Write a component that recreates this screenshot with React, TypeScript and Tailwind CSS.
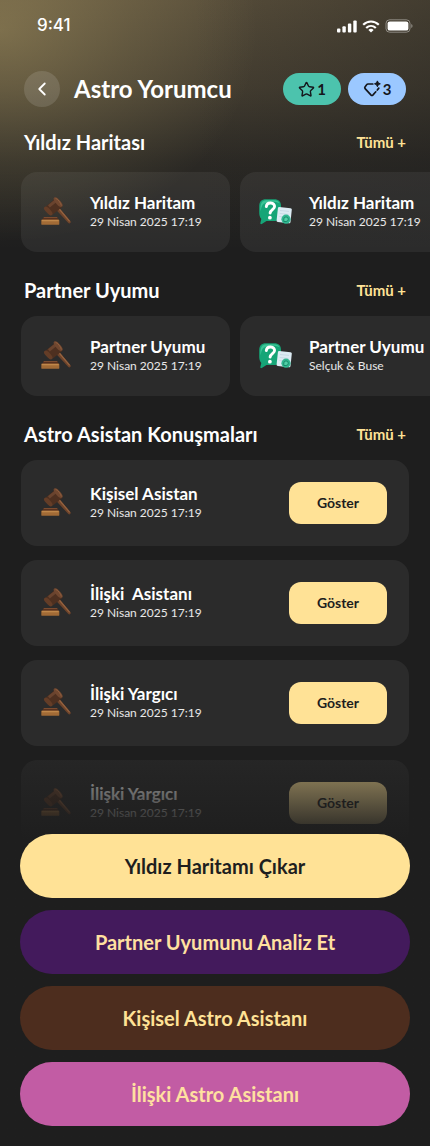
import { ChevronLeft, Star } from "lucide-react";

const chartCards = [
  { icon: "gavel", title: "Yıldız Haritam", sub: "29 Nisan 2025 17:19" },
  { icon: "question", title: "Yıldız Haritam", sub: "29 Nisan 2025 17:19" },
];

const partnerCards = [
  { icon: "gavel", title: "Partner Uyumu", sub: "29 Nisan 2025 17:19" },
  { icon: "question", title: "Partner Uyumu", sub: "Selçuk & Buse" },
];

const chats = ["Kişisel Asistan", "İlişki  Asistanı", "İlişki Yargıcı", "İlişki Yargıcı"];

const actions = [
  { label: "Yıldız Haritamı Çıkar", className: "bg-[#ffe296] text-[#1e1e1e]" },
  { label: "Partner Uyumunu Analiz Et", className: "bg-[#431a5c] text-[#ffe0a0]" },
  { label: "Kişisel Astro Asistanı", className: "bg-[#4d2d1e] text-[#ffe296]" },
  { label: "İlişki Astro Asistanı", className: "bg-[#c25ca4] text-[#ffe0a0]" },
];

function GavelIcon() {
  return (
    <svg viewBox="0 1 32 32" className="size-8 shrink-0" aria-hidden="true">
      <path d="M15.800 14.600l2.800-2.300 12 13.900c.8 1.200-1 2.900-2.200 1.900z" fill="#6e442b" />
      <path d="M17.900 13.400l1-.8 11.200 13.300-.9.8z" fill="#96633f" />
      <path d="M5.800 11.500l9.500-7.800 7 8.200-9.500 7.700z" fill="#4e3020" />
      <path d="M8 10.200l7.200-6 2 2.300-7.400 6.100z" fill="#69432e" />
      <path d="M4.300 12.200c1.400-1.500 3.300-.4 5.500 2.100 2.300 2.600 3.700 4.600 2.300 5.800-1.500 1.100-3.500-.3-5.600-2.800-2.100-2.400-3.300-3.800-2.200-5.100z" fill="#643d27" />
      <path d="M14.200 2.600c1.500-1.100 3.500.3 5.700 2.800 2.300 2.700 3.700 5.100 2.300 6.200-1.500 1.200-3.500-.2-5.800-2.900-2.200-2.600-3.600-5-2.200-6.100z" fill="#70472f" />
      <path d="M15.500 3.300c2.200.5 5.400 4.600 5.900 7.200" fill="none" stroke="#976343" strokeWidth=".8" />
      <path d="M3.600 22.300h13.800l1.100 2.700H2.400z" fill="#57301e" />
      <path d="M4 22h13l.5 1H3.500z" fill="#7b4c30" />
      <rect x="1.300" y="24.600" width="18" height="5.200" rx=".9" fill="#a26b36" />
      <path d="M1.900 25h16.800v1.300H1.900z" fill="#bf874a" />
    </svg>
  );
}

function QuestionIcon() {
  return (
    <svg viewBox="2 0 36 32" className="h-8 w-9 shrink-0" aria-hidden="true">
      <path d="M9 3.300h8c4.800 0 7 2.300 7 6.800v8c0 5-2.300 7-7 7H9.500L4.800 28c-1 .5-1.700-.2-1.400-1.200L4.300 23C2.600 21 2.200 18.600 2.200 16v-5.500c0-5 2.200-7.200 6.800-7.200z" fill="#16a577" />
      <path d="M9.300 4.300h7.500c3 0 5 .9 5.800 3C20 5.500 11 4.800 6.500 8 4.800 9.300 4 13 3.500 15.500 3 8 4.500 4.300 9.300 4.300z" fill="#3cc496" />
      <path d="M9.300 10.600c.3-2.600 2.100-3.800 4.500-3.600 2.500.2 4 1.900 3.700 3.900-.4 2.700-4.200 2.900-4.400 6.200" fill="none" stroke="#fff" strokeWidth="2.900" strokeLinecap="round" />
      <circle cx="12.900" cy="21.700" r="1.900" fill="#fff" />
      <path d="M22.300 11.100l11.200 1.200c.9.1 1.400.7 1.300 1.500l-1.300 12.300c-.1.900-.7 1.300-1.500 1.200l-11.200-1.200c-.8-.1-1.300-.7-1.200-1.500l1.300-12.400c.1-.8.6-1.200 1.400-1.100z" fill="#dcebf3" />
      <path d="M23 14.500l9 .9M22.700 17.500l9 .9M22.400 20.500l4.500.4" stroke="#c3d6e2" strokeWidth=".8" />
      <circle cx="29" cy="23.200" r="4.600" fill="#31b891" />
      <path d="M29 20.900a2.300 2.300 0 0 1 0 4.600h-2.200v-2.300a2.200 2.200 0 0 1 2.200-2.300z" fill="#50d0a7" stroke="#107c60" strokeWidth=".8" />
    </svg>
  );
}

function DiamondIcon() {
  return (
    <svg viewBox="0 0 18 18" className="size-[18px]" fill="none" aria-hidden="true">
      <path
        d="M9.800 4H5.100c-.7 0-1.200.3-1.600.9L2 7.100c-.4.600-.3 1.100.1 1.600l6 6.400c.5.500 1.200.5 1.700 0l3-3.300M14.300 10l1.500-1.900"
        stroke="#15171c"
        strokeWidth="1.700"
        strokeLinecap="round"
      />
      <path d="M14.400.9l.9 2 2 .9-2 .9-.9 2-.9-2-2-.9 2-.9z" fill="#15171c" stroke="#15171c" strokeLinejoin="round" />
    </svg>
  );
}

function StatusBar() {
  return (
    <div className="flex h-[52px] items-center justify-between pr-[17px] pl-[37px]">
      <span className="font-['Inter'] text-[17px] font-medium">9:41</span>
      <div className="flex items-center gap-[5px]">
        <svg viewBox="0 0 20 13" className="h-[13px] w-5" fill="#fff" aria-hidden="true">
          <rect x="0" y="8.500" width="3.400" height="4" rx="1" />
          <rect x="5.400" y="6.300" width="3.400" height="6.200" rx="1" />
          <rect x="10.900" y="3.500" width="3.400" height="9" rx="1" />
          <rect x="16.300" y="0.500" width="3.400" height="12" rx="1" />
        </svg>
        <svg viewBox="0 0 18 13" className="h-[13px] w-[18px]" fill="none" stroke="#fff" strokeWidth="2.200" aria-hidden="true">
          <path d="M1.200 4.800c4.500-4.400 11.100-4.400 15.600 0" />
          <path d="M4.200 8c2.800-2.700 6.800-2.700 9.600 0" />
          <path d="M9 12.500L6.400 9.900c1.500-1.400 3.700-1.400 5.200 0z" fill="#fff" stroke="none" />
        </svg>
        <svg viewBox="0 0 28 14" className="h-[14px] w-7" aria-hidden="true">
          <rect x="1" y=".8" width="24" height="12.400" rx="3.600" fill="none" stroke="#fff" strokeOpacity=".4" />
          <rect x="2.600" y="2.400" width="20.800" height="9.200" rx="2.200" fill="#fff" />
          <path d="M26.300 5v4c1.600-.7 1.600-3.300 0-4z" fill="#fff" fillOpacity=".45" />
        </svg>
      </div>
    </div>
  );
}

function SectionHeader({ title }: { title: string }) {
  return (
    <div className="flex h-7 items-center justify-between px-6">
      <h2 className="text-xl font-bold">{title}</h2>
      <a href="#" className="text-[15px] font-bold text-[#ffe296]">
        Tümü +
      </a>
    </div>
  );
}

function CardText({ title, sub }: { title: string; sub: string }) {
  return (
    <div className="whitespace-pre">
      <h3 className="text-[17px] leading-5 font-bold">{title}</h3>
      <p className="text-xs leading-[18px] text-white/90">{sub}</p>
    </div>
  );
}

function CardRow({ cards }: { cards: typeof chartCards }) {
  return (
    <div className="flex gap-[10px] overflow-hidden pl-[21px]">
      {cards.map((card) => (
        <article
          key={card.icon}
          className="flex h-20 w-[209px] shrink-0 items-center rounded-2xl bg-white/6 pl-[19px]"
        >
          <div className="w-[50px] shrink-0">{card.icon === "gavel" ? <GavelIcon /> : <QuestionIcon />}</div>
          <CardText title={card.title} sub={card.sub} />
        </article>
      ))}
    </div>
  );
}

export default function App() {
  return (
    <div className="relative min-h-screen overflow-x-clip bg-[#1e1e1e] font-['Lato','Noto_Sans',sans-serif] text-white">
      {/* Gold glow behind the header */}
      <div className="absolute inset-x-0 top-0 h-[250px] bg-[radial-gradient(ellipse_60%_85%_at_0%_12%,rgba(255,226,140,0.26),rgba(255,226,140,0.12)_50%,transparent),linear-gradient(to_right,transparent_45%,rgba(30,30,30,0.35)),linear-gradient(to_bottom,rgba(255,216,140,0.25),rgba(255,216,140,0.17)_35%,rgba(255,216,140,0.06)_65%,transparent)]" />

      <div className="relative">
        <StatusBar />

        <header className="flex h-[74px] items-center gap-[14px] px-6">
          <button type="button" aria-label="Geri" className="flex size-9 items-center justify-center rounded-full bg-white/12">
            <ChevronLeft className="size-[22px]" strokeWidth={2} />
          </button>
          <h1 className="flex-1 text-2xl font-bold">Astro Yorumcu</h1>
          <div className="flex gap-[7px]">
            <span className="flex h-8 w-[58px] items-center justify-center gap-[2px] rounded-full bg-[#4cc3ad] text-[15px] font-bold text-[#15171c]">
              <Star className="size-[17px]" strokeWidth={2} />1
            </span>
            <span className="flex h-8 w-[58px] items-center justify-center gap-[2px] rounded-full bg-[#9bc8ff] text-[15px] font-bold text-[#15171c]">
              <DiamondIcon />3
            </span>
          </div>
        </header>

        <main className="pt-[2px]">
          <section className="pb-6">
            <SectionHeader title="Yıldız Haritası" />
            <div className="pt-4">
              <CardRow cards={chartCards} />
            </div>
          </section>

          <section className="pb-6">
            <SectionHeader title="Partner Uyumu" />
            <div className="pt-3">
              <CardRow cards={partnerCards} />
            </div>
          </section>

          <section>
            <SectionHeader title="Astro Asistan Konuşmaları" />
            <div className="flex flex-col gap-[14px] px-[21px] pt-3">
              {chats.map((chat, i) => (
                <article key={i} className="flex h-[86px] items-center rounded-2xl bg-white/6 pr-[22px] pl-[19px]">
                  <div className="w-[50px] shrink-0">
                    <GavelIcon />
                  </div>
                  <CardText title={chat} sub="29 Nisan 2025 17:19" />
                  <button
                    type="button"
                    className="ml-auto h-[42px] w-[98px] rounded-xl bg-[#ffe296] text-sm font-bold text-[#1e1e1e]"
                  >
                    Göster
                  </button>
                </article>
              ))}
            </div>
          </section>
        </main>

        {/* Actions, fading out the list underneath */}
        <footer className="sticky bottom-0 -mt-[94px] flex flex-col gap-3 bg-linear-to-b from-[#1e1e1e]/35 from-0% to-[#1e1e1e] to-[88px] px-5 pt-[82px] pb-5">
          {actions.map((action) => (
            <button key={action.label} type="button" className={`h-16 rounded-full text-xl font-bold ${action.className}`}>
              {action.label}
            </button>
          ))}
        </footer>
      </div>
    </div>
  );
}
